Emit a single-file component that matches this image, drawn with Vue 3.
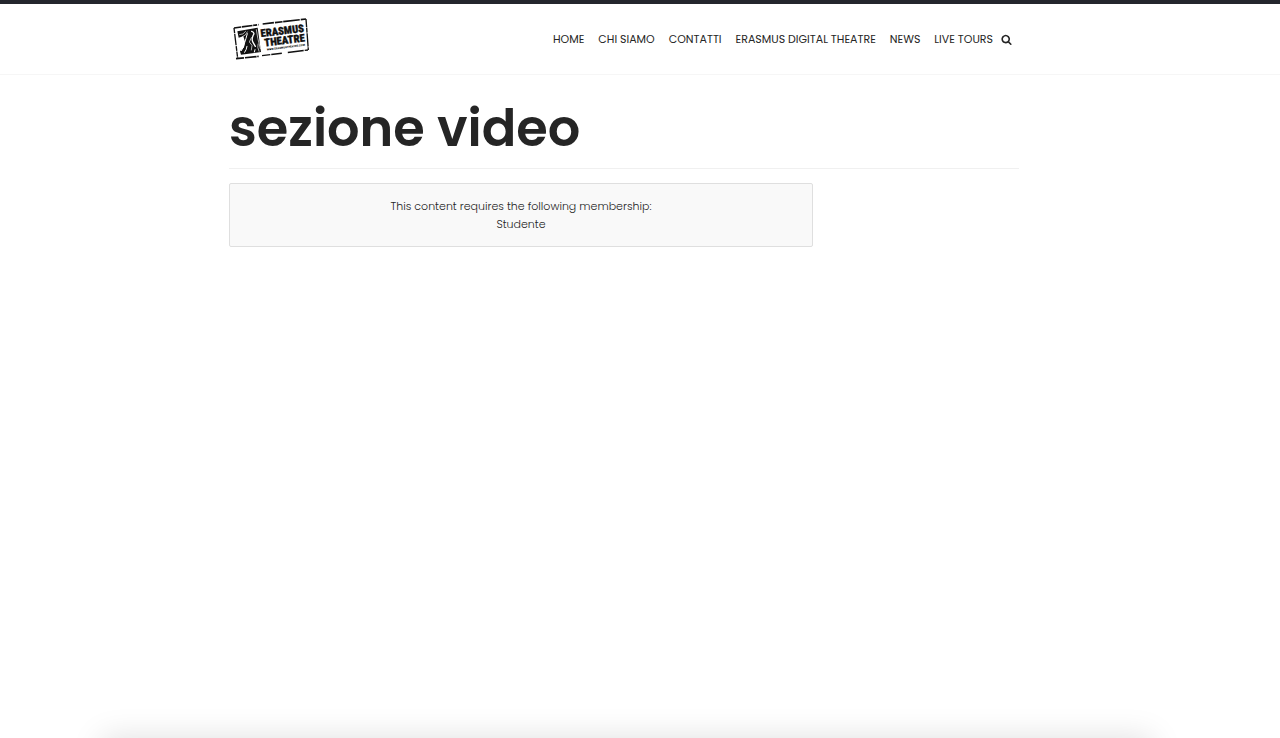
<script setup>
const links = ['HOME', 'CHI SIAMO', 'CONTATTI', 'ERASMUS DIGITAL THEATRE', 'NEWS', 'LIVE TOURS']
</script>

<template>
  <div class="page">
    <header class="header">
      <div class="container bar">
        <a href="#" class="logo" aria-label="Erasmus Theatre">
          <svg viewBox="0 0 234 132" width="78" height="44" aria-hidden="true">
            <g fill="none" stroke="#111" stroke-width="5">
              <path d="M3 33 L77 23" stroke-dasharray="22 2 32 2 12 3" />
              <path d="M89 21 L219 6" stroke-dasharray="34 3 23 2 50 3" />
              <path d="M3 33 L14 124" stroke-dasharray="16 2 34 3 14 2" stroke-width="4" />
              <path d="M219 6 L226 99" stroke-dasharray="24 2 15 2 40 2" stroke-width="4" />
              <path d="M9 125 L77 118" stroke-dasharray="24 3 35 2" />
              <path d="M87 116 L225 99" stroke-dasharray="25 3 32 18 48 3" stroke-width="4" />
            </g>
            <path fill="#111" d="M13 43 L74 32 L84 105 L24 113 L21 103 L33 91 L36 74 L31 58 L17 62 Z" />
            <g fill="none" stroke="#fff" stroke-linecap="round">
              <path d="M20 53 Q31 54 38 43 M27 60 Q40 55 43 45 M70 38 Q73 63 82 95" stroke-width="2" />
              <path d="M43 50 Q39 65 35 77 Q32 91 25 101" stroke-width="3" />
              <path d="M56 43 Q67 47 60 56 Q55 67 60 76 L67 88" stroke-width="4" />
              <path d="M55 62 L49 75 L57 85 L55 99 M75 81 Q72 91 78 103" stroke-width="2" />
              <path d="M35 106 Q41 98 42 88 M66 98 L64 105" stroke-width="3" />
            </g>
            <g class="brand" fill="#111" stroke="#111" transform="rotate(-7 87 61)">
              <text x="84" y="60">ERASMUS</text>
              <text x="92" y="89">THEATRE</text>
              <text x="97" y="102" class="site">WWW.ERASMUSTHEATRE.COM</text>
            </g>
          </svg>
        </a>
        <nav class="nav" aria-label="Menu">
          <a v-for="link in links" :key="link" href="#">{{ link }}</a>
          <button class="search" type="button" aria-label="Search">
            <svg viewBox="0 0 1792 1792" width="11" height="11" aria-hidden="true">
              <path fill="#252525" d="M1216 832q0-185-131.500-316.500T768 384 451.500 515.500 320 832t131.500 316.500T768 1280t316.500-131.500T1216 832zm512 832q0 52-38 90t-90 38q-54 0-90-38l-343-342q-179 124-399 124-143 0-273.500-55.500t-225-150-150-225T64 832t55.500-273.500 150-225 225-150T768 128t273.500 55.500 225 150 150 225T1472 832q0 220-124 399l343 343q37 37 37 90z" />
            </svg>
          </button>
        </nav>
      </div>
    </header>
    <main class="content">
      <div class="container">
        <h1>sezione video</h1>
        <div class="notice">
          <p>This content requires the following membership:<br />Studente</p>
        </div>
      </div>
    </main>
    <div class="banner"></div>
  </div>
</template>

<style>
body {
  margin: 0;
  background: #fff;
}
</style>

<style scoped>
.page {
  min-height: 100vh;
  font-family: Poppins, Inter, "Open Sans", sans-serif;
  color: #252525;
}
.header,
.content {
  padding-right: 32px;
}
.header {
  border-top: 4px solid #24262d;
  border-bottom: 1px solid #f6f6f6;
}
.container {
  box-sizing: border-box;
  max-width: 814px;
  margin: 0 auto;
  padding: 0 12px;
}
.bar {
  display: flex;
  align-items: center;
  justify-content: space-between;
  min-height: 70px;
  padding: 0 19px 0 16px;
}
.logo {
  display: flex;
}
.brand {
  font-family: "Roboto Condensed", Roboto, sans-serif;
  font-size: 32px;
  font-weight: 900;
}
.site {
  font-family: Roboto, sans-serif;
  font-size: 8px;
  stroke: none;
}
.nav {
  display: flex;
  align-items: center;
  gap: 14px;
  font-size: 11px;
  line-height: 18px;
}
.nav a {
  color: inherit;
  text-decoration: none;
  white-space: nowrap;
}
.search {
  display: flex;
  margin: 0 0 0 -6px;
  padding: 0;
  border: 0;
  background: none;
  cursor: pointer;
}
h1 {
  margin: 0 0 14px;
  padding: 20px 0 7px;
  border-bottom: 1px solid #f0f0f0;
  font-size: 51px;
  font-weight: 600;
  line-height: 66px;
}
.notice {
  box-sizing: border-box;
  max-width: 584px;
  padding: 13px 14px;
  border: 1px solid #dfdfdf;
  border-radius: 2px;
  background: #f9f9f9;
  font-size: 11px;
  font-weight: 300;
  line-height: 18px;
  text-align: center;
}
.notice p {
  margin: 0;
}
.banner {
  position: fixed;
  top: 100%;
  left: 8%;
  right: 10%;
  height: 60px;
  box-shadow: 0 0 32px rgba(0, 0, 0, 0.13);
}
</style>
